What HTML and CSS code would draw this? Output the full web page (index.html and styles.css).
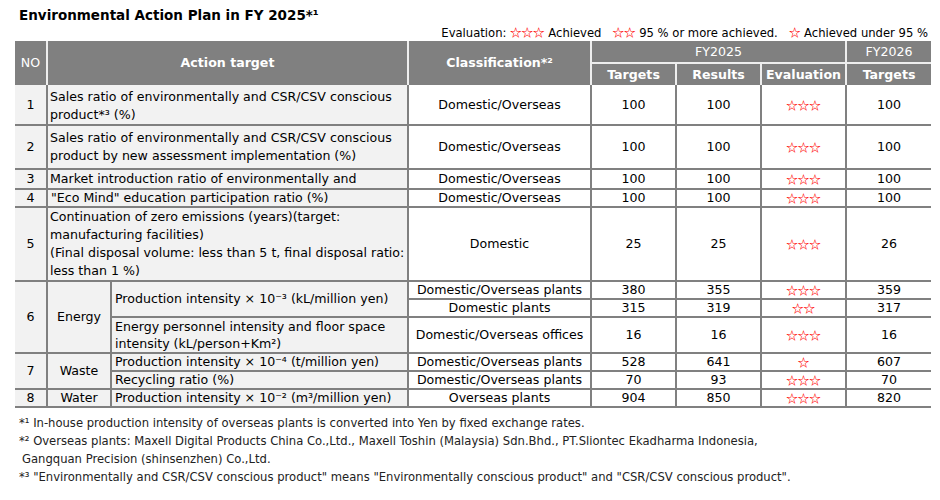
FILE: index.html
```html
<!DOCTYPE html>
<html lang="en">

<head>
    <meta charset="UTF-8">
    <meta name="viewport" content="width=device-width, initial-scale=1.0">
    <title>Environmental Action Plan</title>
    <link rel="stylesheet" href="styles.css">
</head>

<body>
    <h1 class="title">Environmental Action Plan in FY 2025*¹</h1>

    <p class="legend">Evaluation: <span class="star">☆☆☆</span> Achieved&nbsp;&nbsp; <span class="star">☆☆</span> 95 % or more achieved.&nbsp;&nbsp; <span class="star">☆</span> Achieved under 95 %</p>

    <table class="plan">
        <colgroup>
            <col class="c-no">
            <col class="c-cat">
            <col class="c-target">
            <col class="c-class">
            <col class="c-num">
            <col class="c-num">
            <col class="c-num">
            <col class="c-last">
        </colgroup>
        <thead>
            <tr class="head-top">
                <th rowspan="2" class="light">NO</th>
                <th rowspan="2" colspan="2">Action target</th>
                <th rowspan="2">Classification*²</th>
                <th colspan="3" class="light year">FY2025</th>
                <th class="light year">FY2026</th>
            </tr>
            <tr class="head-sub">
                <th>Targets</th>
                <th>Results</th>
                <th>Evaluation</th>
                <th>Targets</th>
            </tr>
        </thead>
        <tbody>
            <!-- 1 -->
            <tr class="r1">
                <td class="no">1</td>
                <td colspan="2" class="txt">Sales ratio of environmentally and CSR/CSV conscious product*³ (%)</td>
                <td>Domestic/Overseas</td>
                <td>100</td>
                <td>100</td>
                <td class="star">☆☆☆</td>
                <td>100</td>
            </tr>
            <!-- 2 -->
            <tr class="r2">
                <td class="no">2</td>
                <td colspan="2" class="txt">Sales ratio of environmentally and CSR/CSV conscious product by new assessment implementation (%)</td>
                <td>Domestic/Overseas</td>
                <td>100</td>
                <td>100</td>
                <td class="star">☆☆☆</td>
                <td>100</td>
            </tr>
            <!-- 3 -->
            <tr class="r3">
                <td class="no">3</td>
                <td colspan="2" class="txt">Market introduction ratio of environmentally and</td>
                <td>Domestic/Overseas</td>
                <td>100</td>
                <td>100</td>
                <td class="star">☆☆☆</td>
                <td>100</td>
            </tr>
            <!-- 4 -->
            <tr class="single">
                <td class="no">4</td>
                <td colspan="2" class="txt">"Eco Mind" education participation ratio (%)</td>
                <td>Domestic/Overseas</td>
                <td>100</td>
                <td>100</td>
                <td class="star">☆☆☆</td>
                <td>100</td>
            </tr>
            <!-- 5 -->
            <tr class="r5">
                <td class="no">5</td>
                <td colspan="2" class="txt">Continuation of zero emissions (years)(target: manufacturing facilities)<br>(Final disposal volume: less than 5 t, final disposal ratio: less than 1 %)</td>
                <td>Domestic</td>
                <td>25</td>
                <td>25</td>
                <td class="star">☆☆☆</td>
                <td>26</td>
            </tr>
            <!-- 6 Energy -->
            <tr class="single">
                <td rowspan="3" class="no">6</td>
                <td rowspan="3" class="no">Energy</td>
                <td rowspan="2" class="txt">Production intensity × 10⁻³ (kL/million yen)</td>
                <td>Domestic/Overseas plants</td>
                <td>380</td>
                <td>355</td>
                <td class="star">☆☆☆</td>
                <td>359</td>
            </tr>
            <tr class="single">
                <td>Domestic plants</td>
                <td>315</td>
                <td>319</td>
                <td class="star">☆☆</td>
                <td>317</td>
            </tr>
            <tr class="r6c">
                <td class="txt">Energy personnel intensity and floor space intensity (kL/person+Km²)</td>
                <td>Domestic/Overseas offices</td>
                <td>16</td>
                <td>16</td>
                <td class="star">☆☆☆</td>
                <td>16</td>
            </tr>
            <!-- 7 Waste -->
            <tr class="single">
                <td rowspan="2" class="no">7</td>
                <td rowspan="2" class="no">Waste</td>
                <td class="txt">Production intensity × 10⁻⁴ (t/million yen)</td>
                <td>Domestic/Overseas plants</td>
                <td>528</td>
                <td>641</td>
                <td class="star">☆</td>
                <td>607</td>
            </tr>
            <tr class="single">
                <td class="txt">Recycling ratio (%)</td>
                <td>Domestic/Overseas plants</td>
                <td>70</td>
                <td>93</td>
                <td class="star">☆☆☆</td>
                <td>70</td>
            </tr>
            <!-- 8 Water -->
            <tr class="single">
                <td class="no">8</td>
                <td class="no">Water</td>
                <td class="txt">Production intensity × 10⁻² (m³/million yen)</td>
                <td>Overseas plants</td>
                <td>904</td>
                <td>850</td>
                <td class="star">☆☆☆</td>
                <td>820</td>
            </tr>
        </tbody>
    </table>

    <div class="notes">
        <p>*¹ In-house production intensity of overseas plants is converted into Yen by fixed exchange rates.</p>
        <p>*² Overseas plants: Maxell Digital Products China Co.,Ltd., Maxell Toshin (Malaysia) Sdn.Bhd., PT.Sliontec Ekadharma Indonesia,<br><span class="indent">Gangquan Precision (shinsenzhen) Co.,Ltd.</span></p>
        <p>*³ "Environmentally and CSR/CSV conscious product" means "Environmentally conscious product" and "CSR/CSV conscious product".</p>
    </div>
</body>

</html>
```

FILE: styles.css
```css
body {
    font-family: "DejaVu Sans", Verdana, Tahoma, sans-serif;
    font-size: 12.6px;
    margin: 0;
    padding: 0;
    background-color: #fff;
    color: #000;
}

.title {
    font-size: 13.5px;
    font-weight: bold;
    line-height: 20px;
    margin: 0;
    padding: 5px 0 0 19px;
}

.legend {
    margin: 0;
    height: 16px;
    padding-right: 12px;
    font-size: 11.6px;
    line-height: 16px;
    text-align: right;
}

.star {
    color: #ff0000;
    font-family: "Noto Sans CJK JP", "DejaVu Sans", sans-serif;
    font-size: 11.5px;
    font-weight: bold;
}

.legend .star {
    line-height: 1;
}

.plan {
    margin-left: 15px;
    width: 916px;
    table-layout: fixed;
    border-collapse: separate;
    border-spacing: 0;
}

.c-no { width: 33px; }
.c-cat { width: 64px; }
.c-target { width: 297px; }
.c-class { width: 183px; }
.c-num { width: 85px; }
.c-last { width: 84px; }

.plan th {
    background-color: #808080;
    color: #fff;
    font-weight: bold;
    padding: 0;
    line-height: 16px;
    border-right: 2px solid #eeeeee;
}

.plan th.light {
    font-weight: normal;
}

.plan th.year {
    border-bottom: 2px solid #eeeeee;
}

.plan th:last-child {
    border-right: 0;
}

.head-top {
    height: 23px;
}

.head-sub {
    height: 21px;
}

.plan td {
    padding: 0 2px;
    line-height: 16px;
    text-align: center;
    white-space: nowrap;
    border-right: 2px solid #808080;
    border-bottom: 2px solid #808080;
}

.plan td:last-child {
    border-right: 0;
}

.plan td.star {
    line-height: 16px;
}

.plan td.no,
.plan td.txt {
    background-color: #f2f2f2;
}

.plan td.txt {
    text-align: left;
    white-space: normal;
    line-height: 18px;
}

.single td.txt {
    line-height: 16px;
}

.r1 { height: 40px; }
.r2 { height: 44px; }
.r3 { height: 19px; }
.single { height: 18px; }
.r5 { height: 74px; }
.r6c { height: 36px; }

.r1 td.txt {
    padding-top: 3px;
}

.r6c td.txt {
    line-height: 17px;
    padding-left: 3px;
}

.plan td[rowspan] + td.txt,
.single td.txt {
    padding-left: 3px;
}

.notes {
    padding: 6px 0 0 19px;
    font-size: 11.6px;
    color: #222;
}

.notes p {
    margin: 0;
    line-height: 18px;
}

.indent {
    padding-left: 3px;
}
```
